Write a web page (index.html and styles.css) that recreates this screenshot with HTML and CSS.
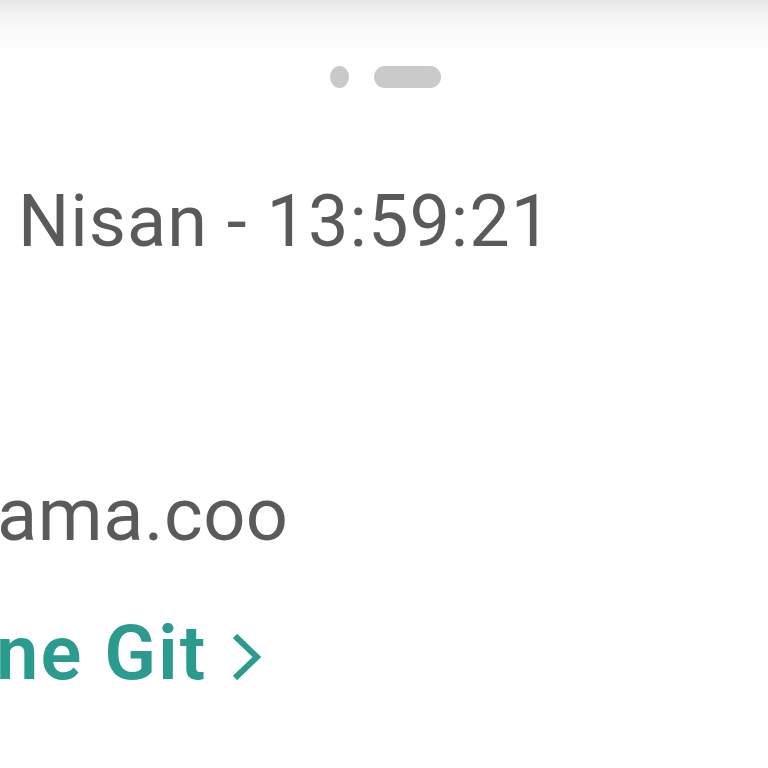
FILE: index.html
```html
<!DOCTYPE html>
<html>
<head>
<meta charset="utf-8">
<link rel="stylesheet" href="styles.css">
</head>
<body>
<div class="sheet">
  <div class="pager">
    <span class="dot"></span>
    <span class="pill"></span>
  </div>
  <div class="date">Nisan - 13:59:21</div>
  <div class="email">ama.coo</div>
  <div class="link">ne Git
    <svg class="chev" viewBox="0 0 30 50" width="30" height="50"><path d="M4 4 L26 25 L4 46" fill="none" stroke="currentColor" stroke-width="6" stroke-linecap="butt" stroke-linejoin="miter"/></svg>
  </div>
</div>
</body>
</html>
```
FILE: styles.css
```css
html, body {
  margin: 0;
  padding: 0;
  background: #ffffff;
}
body {
  width: 768px;
  height: 768px;
  overflow: hidden;
  font-family: Roboto, "Liberation Sans", sans-serif;
}
.sheet {
  height: 768px;
  background: linear-gradient(to bottom, #e6e6e6 0px, #f3f3f3 14px, #fafafa 30px, #ffffff 58px);
  display: flex;
  flex-direction: column;
}
.pager {
  display: flex;
  justify-content: center;
  align-items: center;
  gap: 25px;
  padding-top: 65px;
  padding-left: 2px;
  height: 24px;
}
.dot {
  width: 19px;
  height: 22px;
  border-radius: 50%;
  background: #c9c9c9;
}
.pill {
  width: 67px;
  height: 22px;
  border-radius: 11px;
  background: #cacaca;
}
.date {
  margin-top: 83px;
  padding-left: 18px;
  font-size: 72px;
  line-height: 100px;
  color: #5a5a5a;
  letter-spacing: 1px;
}
.email {
  margin-top: 193px;
  margin-left: -3px;
  font-size: 74px;
  line-height: 100px;
  color: #5a5a5a;
  letter-spacing: 0.5px;
}
.link {
  margin-top: 38px;
  margin-left: -4px;
  font-size: 76px;
  line-height: 100px;
  font-weight: 600;
  color: #2a9b8e;
  letter-spacing: 2px;
  display: flex;
  align-items: center;
  gap: 24px;
}
.chev {
  color: #2a9b8e;
  margin-top: 8px;
}
```
